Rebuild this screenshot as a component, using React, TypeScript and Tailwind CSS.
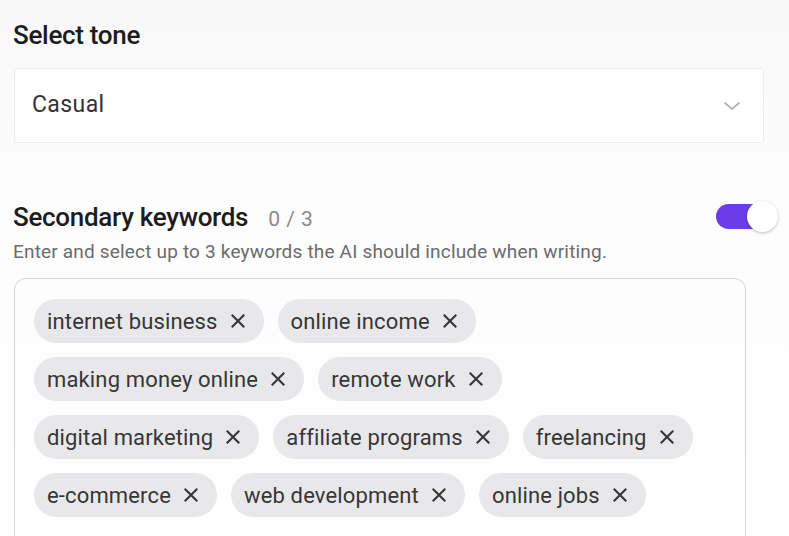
import React from "react";

const chips = [
  ["internet business", "online income"],
  ["making money online", "remote work"],
  ["digital marketing", "affiliate programs", "freelancing"],
  ["e-commerce", "web development", "online jobs"],
];

function XIcon() {
  return (
    <svg width="16" height="16" viewBox="0 0 16 16" fill="none" stroke="#363636" strokeWidth="2.1" strokeLinecap="square">
      <path d="M2.5 2.5 L13.5 13.5 M13.5 2.5 L2.5 13.5" />
    </svg>
  );
}

export default function App() {
  return (
    <div
      className="w-[789px] h-[536px] overflow-hidden bg-white relative"
      style={{ fontFamily: "Roboto, 'Liberation Sans', sans-serif" }}
    >
      <div className="bg-gradient-to-b from-[#f8f8f8] to-[#fcfcfc] pt-[19px] pb-[14px] pl-[13px] pr-[25px]">
        <h2 className="text-[26px] leading-[32px] font-medium text-[#1c1c1c] tracking-[-0.3px]">Select tone</h2>
        <div className="mt-[17px] ml-px h-[75px] bg-white border border-[#ececec] rounded-[3px] flex items-center justify-between pl-[17px] pr-[22px]">
          <span className="text-[23px] text-[#333] tracking-[0.4px]">Casual</span>
          <svg width="18" height="10" viewBox="0 0 18 10" fill="none" stroke="#b3b3b3" strokeWidth="1.8" strokeLinecap="round" strokeLinejoin="round">
            <path d="M2 2 L9 8 L16 2" />
          </svg>
        </div>
      </div>
      <div className="bg-gradient-to-b from-[#fcfcfc] to-white pl-[13px] pr-[11px] pt-[46px]">
        <div className="flex items-center justify-between h-[31px]">
          <div className="flex items-baseline gap-[20px]">
            <span className="text-[26px] leading-[31px] font-medium text-[#1c1c1c] tracking-[-0.3px]">Secondary keywords</span>
            <span className="text-[21px] text-[#8a8a8a] tracking-[0.5px]">0 / 3</span>
          </div>
          <div className="relative w-[62px] h-[31px] -mt-[4px]">
            <div className="absolute left-0 top-[3px] w-[48px] h-[25px] rounded-full bg-[#6a3de8]" />
            <div className="absolute right-0 top-0 w-[31px] h-[31px] rounded-full bg-white shadow-[0_1px_3px_rgba(0,0,0,0.25)]" />
          </div>
        </div>
        <p className="mt-[6px] text-[19px] leading-[24px] text-[#6b6b6b] tracking-[0.18px]">
          Enter and select up to 3 keywords the AI should include when writing.
        </p>
        <div className="mt-[14px] ml-px w-[732px] h-[300px] border border-[#d4d4d4] rounded-[12px] pt-[20px] pl-[19px] flex flex-col gap-[14px]">
          {chips.map((row, i) => (
            <div key={i} className="flex gap-[14px]">
              {row.map((c) => (
                <div key={c} className="h-[44px] rounded-full bg-[#e8e8eb] flex items-center gap-[12px] pl-[13px] pr-[18px]">
                  <span className="text-[22px] text-[#363636] tracking-[0.15px]">{c}</span>
                  <XIcon />
                </div>
              ))}
            </div>
          ))}
        </div>
      </div>
    </div>
  );
}
